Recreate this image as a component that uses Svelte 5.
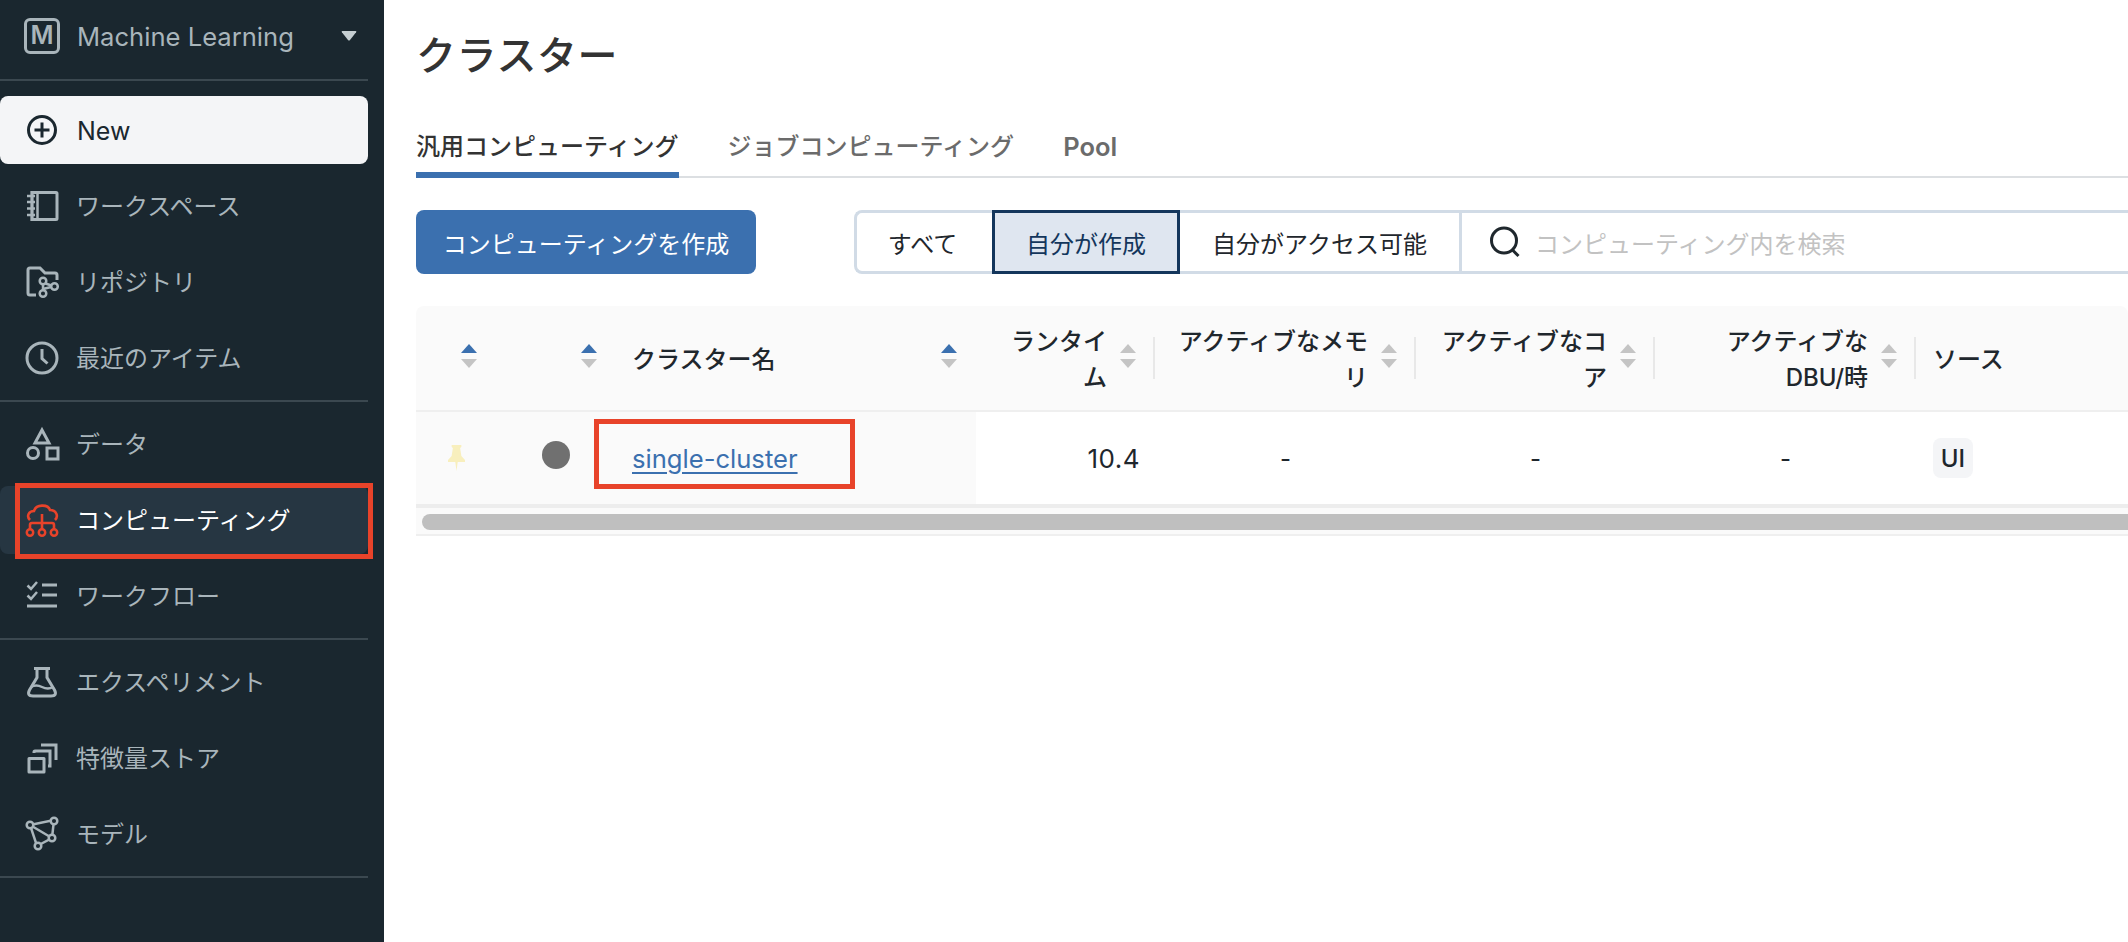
<script>
  const groups = [
    [
      { id: 'notebook', label: 'ワークスペース' },
      { id: 'repo', label: 'リポジトリ' },
      { id: 'clock', label: '最近のアイテム' },
    ],
    [
      { id: 'data', label: 'データ' },
      { id: 'compute', label: 'コンピューティング', active: true },
      { id: 'workflow', label: 'ワークフロー' },
    ],
    [
      { id: 'flask', label: 'エクスペリメント' },
      { id: 'store', label: '特徴量ストア' },
      { id: 'model', label: 'モデル' },
    ],
  ];

  const numericCols = [
    { lines: ['ランタイ', 'ム'], value: '10.4', cls: 'right' },
    { lines: ['アクティブなメモ', 'リ'], value: '-', cls: 'center' },
    { lines: ['アクティブなコ', 'ア'], value: '-', cls: 'center' },
    { lines: ['アクティブな', 'DBU/時'], value: '-', cls: 'center' },
  ];
</script>

{#snippet sorter(active)}
  <svg class="sorter" viewBox="0 0 16 24" width="16" height="24">
    <path d="M8 0l8 9H0z" fill={active ? '#3b70af' : '#c4c4c4'} />
    <path d="M0 15h16l-8 9z" fill="#c4c4c4" />
  </svg>
{/snippet}

{#snippet icon(id)}
  <svg class="icon" viewBox="0 0 36 36" width="36" height="36" fill="none" stroke="currentColor" stroke-width="3">
    {#if id === 'notebook'}
      <path d="M8 4.500h24a1 1 0 0 1 1 1v25a1 1 0 0 1-1 1H8z" />
      <path d="M8 3v30M13.500 4v28" stroke-width="2.500" />
      <path d="M3 8h8M3 14h8M3 20.500h8M3 27h8" stroke-width="2.500" />
    {:else if id === 'repo'}
      <path d="M12 31H6q-2 0-2-2V6q0-2 2-2h10l5 5h10q2 0 2 2v5" />
      <circle cx="19" cy="17" r="3.300" stroke-width="2.500" />
      <circle cx="30.500" cy="22.500" r="3.300" stroke-width="2.500" />
      <circle cx="19" cy="29.500" r="3.300" stroke-width="2.500" />
      <path d="M19 20.500v5.500M21.500 19.500l6 2M19 25l8-2" stroke-width="2.500" />
    {:else if id === 'clock'}
      <circle cx="18" cy="18" r="15" />
      <path d="M18 9v9.500l5.500 5" />
    {:else if id === 'data'}
      <path d="M18 4l7 13H11z" />
      <circle cx="9" cy="27" r="5.500" />
      <path d="M23 22h11v11H23z" />
    {:else if id === 'compute'}
      <path d="M6 18C2 14 5 9 10 9c2-7 14-7 16-1 6 0 9 6 5 10" stroke-width="2.600" />
      <path d="M18 12v15M6 27v-4q0-2 2-2h20q2 0 2 2v4" stroke-width="2.600" />
      <circle cx="6" cy="30.500" r="3.200" stroke-width="2.500" />
      <circle cx="18" cy="30.500" r="3.200" stroke-width="2.500" />
      <circle cx="30" cy="30.500" r="3.200" stroke-width="2.500" />
    {:else if id === 'workflow'}
      <path d="M3.500 7.500l3.500 3.500 6-7M3.500 17.500l3.500 3.500 6-7" stroke-width="2.500" />
      <path d="M18 7h15M18 17h15M3 28h30" />
    {:else if id === 'flask'}
      <path d="M10 4.500h16M13 4.500v9L5.500 26q-3 6 3.500 6h18q6.500 0 3.500-6L23 13.500v-9" />
      <path d="M7 23q5-3 11 0t11 0" stroke-width="2.500" />
    {:else if id === 'store'}
      <path d="M5 18.500h15v13.500H5z" stroke-linejoin="round" />
      <path d="M10 13v-1q0-1 1-1h15v15h-2" />
      <path d="M17 5h15v15" />
    {:else if id === 'model'}
      <path d="M6 9l24-5-2 18-15 8zM6 9l22 13" stroke-width="2.500" />
      <circle cx="6" cy="9" r="3.300" fill="#1a272f" stroke-width="2.500" />
      <circle cx="30" cy="5" r="3.300" fill="#1a272f" stroke-width="2.500" />
      <circle cx="28" cy="22" r="3.300" fill="#1a272f" stroke-width="2.500" />
      <circle cx="14" cy="30" r="3.300" fill="#1a272f" stroke-width="2.500" />
    {/if}
  </svg>
{/snippet}

<div class="app">
  <aside class="sidebar">
    <div class="workspace">
      <span class="logo">M</span>
      <span class="ws-name">Machine Learning</span>
      <svg class="caret" viewBox="0 0 16 10" width="16" height="10"><path d="M1.500 0h13q1.500 0 .6 1.200L9 9q-1 1-2 0L.9 1.200Q0 0 1.500 0z" fill="#c5ced2" /></svg>
    </div>
    <hr />
    <button class="new-btn">
      <svg class="icon" viewBox="0 0 36 36" width="36" height="36" fill="none" stroke="currentColor" stroke-width="3">
        <circle cx="18" cy="18" r="13.500" />
        <path d="M18 10.500v15M10.500 18h15" />
      </svg>
      <span class="new-label">New</span>
    </button>
    {#each groups as group}
      <nav class="group">
        {#each group as item}
          <div class="item" class:active={item.active}>
            {@render icon(item.id)}
            <span class="label">{item.label}</span>
            {#if item.active}<div class="mark nav-mark"></div>{/if}
          </div>
        {/each}
      </nav>
      <hr />
    {/each}
  </aside>

  <main class="main">
    <h1>クラスター</h1>

    <div class="tabs">
      <div class="tab selected">汎用コンピューティング</div>
      <div class="tab">ジョブコンピューティング</div>
      <div class="tab pool">Pool</div>
    </div>

    <div class="toolbar">
      <button class="create">コンピューティングを作成</button>
      <div class="filters">
        <button class="seg first">すべて</button>
        <button class="seg on">自分が作成</button>
        <button class="seg last">自分がアクセス可能</button>
        <div class="search">
          <svg viewBox="0 0 32 32" width="32" height="32" fill="none" stroke="#1f272d" stroke-width="3">
            <circle cx="15" cy="14.500" r="12.500" />
            <path d="M23.500 24l6 6" />
          </svg>
          <span>コンピューティング内を検索</span>
        </div>
      </div>
    </div>

    <div class="table">
      <div class="row head">
        <div class="th center-sort">{@render sorter(true)}</div>
        <div class="th center-sort">{@render sorter(true)}</div>
        <div class="th name">
          <span>クラスター名</span>
          {@render sorter(true)}
        </div>
        {#each numericCols as col}
          <div class="th num">
            <span>{col.lines[0]}<br />{col.lines[1]}</span>
            {@render sorter(false)}
            <i class="sep"></i>
          </div>
        {/each}
        <div class="th source">
          <span>ソース</span>
          {@render sorter(false)}
        </div>
      </div>

      <div class="row body">
        <div class="td fixed pin-cell">
          <svg viewBox="0 0 14 26" width="17" height="26" preserveAspectRatio="none"><path d="M3 0h8v2l-1 1 1 8 3 4v2H8l-1 9-1-9H0v-2l3-4 1-8-1-1z" fill="#f8efbd" /></svg>
        </div>
        <div class="td fixed dot-cell"><span class="dot"></span></div>
        <div class="td fixed link-cell">
          <a href="#cluster">single-cluster</a>
          <div class="mark link-mark"></div>
        </div>
        {#each numericCols as col}
          <div class="td {col.cls}">{col.value}</div>
        {/each}
        <div class="td source-cell"><span class="tag">UI</span></div>
      </div>

      <div class="scroll"><div class="thumb"></div></div>
    </div>
  </main>
</div>

<style>
  :global(body) { margin: 0; background: #fff; overflow: hidden; }
  .app {
    display: flex; height: 942px; overflow: hidden;
    font-family: Inter, "Noto Sans CJK JP", sans-serif; font-size: 24px; color: #1f272d;
  }

  .sidebar { width: 384px; flex: none; background: #1a272f; color: #a9b5bb; padding-right: 16px; box-sizing: border-box; }
  .sidebar hr { border: none; height: 2px; background: #3b4850; margin: 0; }
  .workspace { height: 79px; display: flex; align-items: center; padding: 0 11px 8px 24px; box-sizing: border-box; }
  .logo {
    width: 36px; height: 36px; box-sizing: border-box; flex: none;
    border: 3.5px solid #a9b5bb; border-radius: 6px; margin-right: 17px;
    display: flex; align-items: center; justify-content: center;
    font-size: 25px; font-weight: 600; line-height: 1;
  }
  .ws-name { font-size: 25.6px; margin-top: 2px; }
  .caret { margin-left: auto; }
  .new-btn {
    display: flex; align-items: center; gap: 17px; width: 100%; height: 68px; margin: 15px 0 8px;
    padding: 0 0 0 24px; border: none; border-radius: 8px; background: #f4f5f7; color: #1a272f;
    font: inherit; font-size: 25px; font-weight: 400; text-align: left;
  }
  .new-label { margin-top: 2px; }
  .group { display: flex; flex-direction: column; gap: 8px; margin-bottom: 8px; }
  .group + hr { margin-bottom: 8px; }
  .item { position: relative; display: flex; align-items: center; gap: 16px; height: 68px; padding-left: 24px; border-radius: 8px; }
  .item.active { background: #263642; color: #e8432a; }
  .item.active span { color: #fff; }
  .label { margin-top: -3px; }
  .icon { flex: none; }

  .mark { position: absolute; border: 5px solid #e8432a; box-sizing: border-box; pointer-events: none; }
  .nav-mark { left: 15px; top: -3px; width: 358px; height: 76px; }
  .link-mark { left: -23px; top: 7px; width: 261px; height: 70px; }

  .main { flex: 1; min-width: 0; padding: 38px 0 0 32px; }
  h1 { margin: 0; font-size: 40px; line-height: 36px; font-weight: 500; color: #333; letter-spacing: 0.6px; }

  .tabs { display: flex; gap: 49px; margin-top: 43px; height: 61px; border-bottom: 2px solid #dcdfe2; box-sizing: border-box; }
  .tab { font-weight: 500; color: #6b6b6b; height: 61px; line-height: 60px; box-sizing: border-box; }
  .tab.selected { color: #333; border-bottom: 6px solid #3b70af; }
  .pool { font-size: 25.5px; font-weight: 600; }

  .toolbar { display: flex; margin-top: 32px; height: 64px; }
  .toolbar button { font: inherit; }
  .create {
    width: 340px; height: 64px; padding: 0; border: none; border-radius: 8px;
    background: #3b70af; color: #fff;
  }
  .filters { display: flex; flex: 1; margin-left: 98px; min-width: 0; }
  .seg {
    height: 64px; padding: 0; background: #fff; color: #1f272d; box-sizing: border-box;
    border: 3px solid #d1dbe6; border-left: none; border-right: none;
  }
  .seg.first { width: 138px; padding-right: 4px; border-left: 3px solid #d1dbe6; border-radius: 8px 0 0 8px; }
  .seg.on { width: 188px; background: #dfe6f0; color: #14365c; border: 3px solid #14365c; }
  .seg.last { width: 279px; }
  .search {
    flex: 1; display: flex; align-items: center; gap: 14px; padding-left: 27px; white-space: nowrap;
    border: 3px solid #d1dbe6; border-right: none; color: #c2c2c2; box-sizing: border-box; height: 64px;
  }

  .table { margin-top: 32px; }
  .row { display: grid; grid-template-columns: 81px 120px 359px 179px 261px 239px 261px 320px; }
  .head { height: 104px; background: #fafafa; border-radius: 8px 8px 0 0; border-bottom: 2px solid #efefef; box-sizing: content-box; font-weight: 500; line-height: 36px; }
  .th { display: flex; align-items: center; }
  .th span { padding-top: 3px; }
  .center-sort { justify-content: flex-end; padding-right: 20px; }
  .sorter { flex: none; margin-top: -4px; }
  .name { justify-content: space-between; padding: 0 19px 0 15px; }
  .num { justify-content: flex-end; text-align: right; }
  .num .sorter { margin-left: 13px; }
  .sep { width: 2px; height: 42px; background: #e8e8e8; margin-left: 17px; flex: none; }
  .source { justify-content: space-between; padding: 0 12px 0 17px; }

  .body { height: 92px; }
  .td { display: flex; align-items: center; min-width: 0; }
  .fixed { background: #fafafa; }
  .pin-cell, .dot-cell, .center { justify-content: center; }
  .right { justify-content: flex-end; padding-right: 15px; font-size: 26px; letter-spacing: 0.5px; }
  .dot { width: 28px; height: 28px; border-radius: 50%; background: #707070; margin: -6px 2px 0 0; }
  .link-cell { position: relative; padding-left: 15px; }
  .link-cell a { color: #3b70af; text-decoration: underline; text-underline-offset: 4px; font-size: 25.6px; }
  .source-cell { padding-left: 17px; }
  .tag { width: 40px; height: 40px; border-radius: 8px; background: #f4f5f7; display: flex; align-items: center; justify-content: center; font-weight: 500; }

  .scroll { padding-top: 6px; box-sizing: border-box; background: #fafafa; border-top: 4px solid #ededed; border-bottom: 2px solid #efefef; height: 32px; }
  .thumb { height: 16px; margin-left: 6px; border-radius: 8px 0 0 8px; background: #bfbfbf; }
</style>
